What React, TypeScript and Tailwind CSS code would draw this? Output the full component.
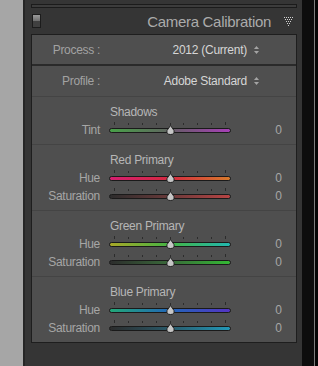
const font = "font-['Liberation_Sans',Arial,sans-serif]";

type SliderDef = { label: string; track: string };
type Section = { title: string; sliders: SliderDef[] };

const sections: Section[] = [
  {
    title: 'Shadows',
    sliders: [
      { label: 'Tint', track: 'bg-[linear-gradient(to_right,#48a048,#5e6a5e_45%,#6a5a6c_55%,#a840b8)]' },
    ],
  },
  {
    title: 'Red Primary',
    sliders: [
      { label: 'Hue', track: 'bg-[linear-gradient(to_right,#d41e70,#d42a40_50%,#d67a2c)]' },
      { label: 'Saturation', track: 'bg-[linear-gradient(to_right,#2c2c2c,#6a3a3a_50%,#b84444)]' },
    ],
  },
  {
    title: 'Green Primary',
    sliders: [
      { label: 'Hue', track: 'bg-[linear-gradient(to_right,#a8a828,#44b444_50%,#22b8b0)]' },
      { label: 'Saturation', track: 'bg-[linear-gradient(to_right,#2c2c2c,#3a6a3a_50%,#34b834)]' },
    ],
  },
  {
    title: 'Blue Primary',
    sliders: [
      { label: 'Hue', track: 'bg-[linear-gradient(to_right,#22a878,#2266b8_50%,#5434c4)]' },
      { label: 'Saturation', track: 'bg-[linear-gradient(to_right,#2c2c2c,#2a5a6a_50%,#2298b8)]' },
    ],
  },
];

function UpDown() {
  return (
    <svg width="5" height="8" viewBox="0 0 5 8" className="shrink-0">
      <path d="M2.5 0 L5 3 L0 3 Z" fill="#a4a4a4" />
      <path d="M0 5 L5 5 L2.5 8 Z" fill="#a4a4a4" />
    </svg>
  );
}

function DotTriangle() {
  const dots: [number, number][] = [];
  for (let row = 0; row < 5; row++) {
    for (let x = row; x <= 8 - row; x += 2) dots.push([x, row * 2]);
  }
  return (
    <svg width="9" height="9" viewBox="0 0 9 9" className="shrink-0">
      {dots.map(([x, y]) => (
        <rect key={`${x}-${y}`} x={x} y={y} width="1" height="1" fill="#cfcfcf" />
      ))}
    </svg>
  );
}

function Thumb() {
  return (
    <svg width="9" height="10" viewBox="0 0 9 10" className="absolute left-[57px] top-[4px]">
      <path d="M4.5 0.5 L8 5.5 Q8.8 9.5 4.5 9.5 Q0.2 9.5 1 5.5 Z" fill="#c6c6c6" stroke="#232323" strokeWidth="1" />
    </svg>
  );
}

function Slider({ label, track }: SliderDef) {
  return (
    <div className="flex h-[18px] items-center">
      <div className="w-[68px] text-right text-[12px] leading-[16px] tracking-[-0.3px] text-[#a6a6a6]">{label}</div>
      <div className="relative ml-[9px] h-[18px] w-[122px] pt-[7px]">
        <div className="absolute left-0 right-0 top-[1px] flex h-[3px] items-end justify-between px-[5px]">
          {Array.from({ length: 9 }).map((_, i) => (
            <div key={i} className={`w-[1px] bg-[#2c2c2c] ${i === 0 || i === 8 ? 'h-[3px]' : 'h-[2px]'}`} />
          ))}
        </div>
        <div className={`h-[5px] rounded-full border border-[#1a1a1a] ${track}`} />
        <Thumb />
      </div>
      <div className="flex-1 pr-[14px] text-right text-[12px] leading-[16px] text-[#a6a6a6]">0</div>
    </div>
  );
}

export default function App() {
  return (
    <div className={`flex h-[366px] w-[318px] overflow-hidden bg-[#333333] ${font}`}>
      <div className="w-[23px] bg-[#a6a6a6]" />
      <div className="w-[2px] bg-[#262626]" />

      <div className="flex w-[277px] flex-col bg-[#353535] pl-[6px] pr-[5px]">
        <div className="mt-[4px] h-[4px] border border-[#1b1b1b] bg-[#3c3c3c]" />

        {/* panel header */}
        <div className="flex h-[26px] items-center">
          <div className="ml-[1px] flex h-[14px] w-[9px] flex-col border border-[#1c1c1c]">
            <div className="h-[6px] bg-[linear-gradient(to_bottom,#9a9a9a,#6e6e6e)]" />
            <div className="flex-1 bg-[#404040]" />
          </div>
          <div className="flex-1 pt-[1px] text-right text-[15px] leading-[26px] tracking-[-0.3px] text-[#ababab]">
            Camera Calibration
          </div>
          <div className="ml-[13px] mr-[4px] pt-[1px]">
            <DotTriangle />
          </div>
        </div>

        <div className="flex flex-col border border-[#1e1e1e] bg-[#4f4f4f]">
          <div className="flex h-[29px] items-center">
            <div className="w-[68px] text-right text-[12px] tracking-[-0.3px] text-[#a2a2a2]">Process :</div>
            <div className="flex-1 text-right text-[12px] tracking-[-0.25px] text-[#d6d6d6]">2012 (Current)</div>
            <div className="ml-[7px] mr-[37px]">
              <UpDown />
            </div>
          </div>
          <div className="h-[2px] bg-[#2a2a2a]" />
          <div className="flex h-[30px] items-center">
            <div className="w-[68px] text-right text-[12px] tracking-[-0.3px] text-[#a2a2a2]">Profile :</div>
            <div className="flex-1 text-right text-[12px] tracking-[-0.25px] text-[#d6d6d6]">Adobe Standard</div>
            <div className="ml-[7px] mr-[37px]">
              <UpDown />
            </div>
          </div>

          {sections.map((s) => (
            <div key={s.title} className="border-t border-[#444444] pb-[5px] pt-[7px]">
              <div className="h-[17px] pl-[78px] text-[12px] leading-[16px] tracking-[-0.3px] text-[#b6b6b6]">{s.title}</div>
              {s.sliders.map((sl) => (
                <Slider key={sl.label} {...sl} />
              ))}
            </div>
          ))}
        </div>
      </div>

      <div className="w-[12px] bg-[#0d0d0d]" />
      <div className="w-[1px] bg-[#7c7c7c]" />
      <div className="w-[3px] bg-[#050505]" />
    </div>
  );
}
